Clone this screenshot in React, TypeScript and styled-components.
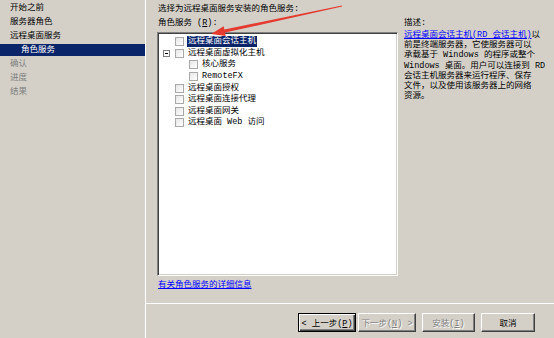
import styled, { createGlobalStyle } from "styled-components"

const GlobalStyle = createGlobalStyle`
    *, *::before, *::after { box-sizing: border-box; }
    html, body {
        margin: 0;
        padding: 0;
        background: #d4d0c8;
    }
    body {
        font-family: "Liberation Mono", "Noto Sans CJK SC", monospace;
        font-size: 8.5px;
        color: #000;
    }
`

const palette = {
    face: "#d4d0c8",
    shadow: "#808080",
    dark: "#404040",
    navy: "#0a246a",
    link: "#0000ff",
    muted: "#808080",
}

const Window = styled.div`
    position: relative;
    display: flex;
    width: 554px;
    height: 338px;
    overflow: hidden;
    background: ${palette.face};
`

const Sidebar = styled.ul`
    width: 146px;
    margin: 0;
    padding: 0;
    list-style: none;
    border-right: 1px solid #fff;
`

const Step = styled.li<{ $state: "done" | "current" | "todo"; $sub?: boolean }>`
    height: 12px;
    line-height: 12px;
    margin: 2px 0;
    padding-left: ${({ $sub }) => ($sub ? 21 : 10)}px;
    white-space: nowrap;
    color: ${({ $state }) => ($state === "current" ? "#fff" : $state === "todo" ? palette.muted : "#000")};
    background: ${({ $state }) => ($state === "current" ? palette.navy : "transparent")};
`

const Main = styled.div`
    flex: 1;
    display: flex;
    flex-direction: column;
`

const Body = styled.div`
    flex: 1;
    padding: 3px 0 0 11px;
`

const Intro = styled.div`
    line-height: 12px;
    padding-left: 1px;
    white-space: nowrap;
`

const Columns = styled.div`
    display: flex;
    gap: 6px;
    margin-top: 2px;
`

const LeftCol = styled.div`
    width: 241px;
    display: flex;
    flex-direction: column;
`

const FieldLabel = styled.div`
    line-height: 12px;
    padding-left: 1px;
    margin-bottom: 3px;
`

const TreeBox = styled.div`
    height: 244px;
    background: #fff;
    border: 1px solid;
    border-color: ${palette.shadow} #fff #fff ${palette.shadow};
    box-shadow: inset 1px 1px ${palette.dark}, inset -1px -1px ${palette.face};
    padding-top: 3px;
`

const TreeRow = styled.div<{ $level: number }>`
    display: flex;
    align-items: center;
    height: 11.6px;
    padding-left: ${({ $level }) => 5 + $level * 14}px;
    white-space: nowrap;
`

const ExpanderSlot = styled.span`
    width: 12px;
    display: flex;
    align-items: center;
`

const Expander = styled.span`
    position: relative;
    width: 7px;
    height: 7px;
    border: 1px solid ${palette.shadow};
    background: #fff;

    &::after {
        content: "";
        position: absolute;
        left: 1px;
        top: 2px;
        width: 3px;
        height: 1px;
        background: #000;
    }
`

const Check = styled.span`
    width: 9px;
    height: 9px;
    margin-right: 4px;
    border: 1px solid #a9a9a9;
    background: linear-gradient(135deg, #e6e6e6, #fff);
`

const NodeText = styled.span<{ $selected?: boolean }>`
    line-height: 11px;
    padding: 0 1px;
    margin-left: -1px;
    color: ${({ $selected }) => ($selected ? "#fff" : "#000")};
    background: ${({ $selected }) => ($selected ? palette.navy : "transparent")};
`

const Link = styled.a`
    color: ${palette.link};
    text-decoration: underline;
    cursor: pointer;
`

const MoreInfo = styled(Link)`
    display: block;
    margin-top: 3px;
    line-height: 12px;
    padding-left: 1px;
`

const RightCol = styled.div`
    flex: 1;
`

const DescTitle = styled.div`
    line-height: 12px;
`

const DescText = styled.div`
    margin-top: 1px;
    line-height: 10.2px;
    white-space: nowrap;
`

const Footer = styled.div`
    height: 35px;
    border-top: 1px solid #fff;
    display: flex;
    justify-content: flex-end;
    align-items: flex-start;
    padding: 9px 19px 0 0;
`

const Button = styled.button<{ $width: number; $default?: boolean; $gap?: number }>`
    width: ${({ $width }) => $width}px;
    height: 19px;
    margin-left: ${({ $gap }) => $gap ?? 0}px;
    padding: 0;
    font: inherit;
    font-size: 8.5px;
    background: ${palette.face};
    border: 1px solid;
    border-color: ${({ $default }) => ($default ? "#000" : `#fff ${palette.dark} ${palette.dark} #fff`)};
    box-shadow: ${({ $default }) =>
        $default
            ? `inset 1px 1px #fff, inset -1px -1px ${palette.dark}, inset -2px -2px ${palette.shadow}`
            : `inset -1px -1px ${palette.shadow}`};
    color: ${({ disabled }) => (disabled ? palette.muted : "#000")};
    text-shadow: ${({ disabled }) => (disabled ? "1px 1px #fff" : "none")};
`

const Arrow = styled.svg`
    position: absolute;
    left: 0;
    top: 0;
    pointer-events: none;
`

const steps = [
    { label: "开始之前", state: "done" as const },
    { label: "服务器角色", state: "done" as const },
    { label: "远程桌面服务", state: "done" as const },
    { label: "角色服务", state: "current" as const, sub: true },
    { label: "确认", state: "todo" as const },
    { label: "进度", state: "todo" as const },
    { label: "结果", state: "todo" as const },
]

const nodes = [
    { label: "远程桌面会话主机", level: 0, selected: true },
    { label: "远程桌面虚拟化主机", level: 0, expanded: true },
    { label: "核心服务", level: 1 },
    { label: "RemoteFX", level: 1 },
    { label: "远程桌面授权", level: 0 },
    { label: "远程桌面连接代理", level: 0 },
    { label: "远程桌面网关", level: 0 },
    { label: "远程桌面 Web 访问", level: 0 },
]

export default function App() {
    return (
        <>
            <GlobalStyle />
            <Window>
                <Sidebar>
                    {steps.map((s) => (
                        <Step key={s.label} $state={s.state} $sub={s.sub}>
                            {s.label}
                        </Step>
                    ))}
                </Sidebar>
                <Main>
                    <Body>
                        <Intro>选择为远程桌面服务安装的角色服务:</Intro>
                        <Columns>
                            <LeftCol>
                                <FieldLabel>角色服务 (<u>R</u>):</FieldLabel>
                                <TreeBox>
                                    {nodes.map((n) => (
                                        <TreeRow key={n.label} $level={n.level}>
                                            <ExpanderSlot>{n.expanded && <Expander />}</ExpanderSlot>
                                            <Check />
                                            <NodeText $selected={n.selected}>{n.label}</NodeText>
                                        </TreeRow>
                                    ))}
                                </TreeBox>
                                <MoreInfo>有关角色服务的详细信息</MoreInfo>
                            </LeftCol>
                            <RightCol>
                                <DescTitle>描述:</DescTitle>
                                <DescText>
                                    <Link>远程桌面会话主机(RD 会话主机)</Link>以<br />
                                    前是终端服务器，它使服务器可以<br />
                                    承载基于 Windows 的程序或整个<br />
                                    Windows 桌面。用户可以连接到 RD<br />
                                    会话主机服务器来运行程序、保存<br />
                                    文件，以及使用该服务器上的网络<br />
                                    资源。
                                </DescText>
                            </RightCol>
                        </Columns>
                    </Body>
                    <Footer>
                        <Button $width={58} $default>
                            &lt; 上一步(<u>P</u>)
                        </Button>
                        <Button $width={58} $gap={2} disabled>
                            下一步(<u>N</u>) &gt;
                        </Button>
                        <Button $width={53} $gap={6} disabled>
                            安装(<u>I</u>)
                        </Button>
                        <Button $width={54} $gap={6}>
                            取消
                        </Button>
                    </Footer>
                </Main>
                <Arrow width={554} height={338} viewBox="0 0 554 338">
                    <polygon
                        points="211,34 225.7,36 225,32.6 342.1,6.6 341.9,5.4 224.4,29.6 223.7,26.2"
                        fill="#e53a2f"
                    />
                </Arrow>
            </Window>
        </>
    )
}
